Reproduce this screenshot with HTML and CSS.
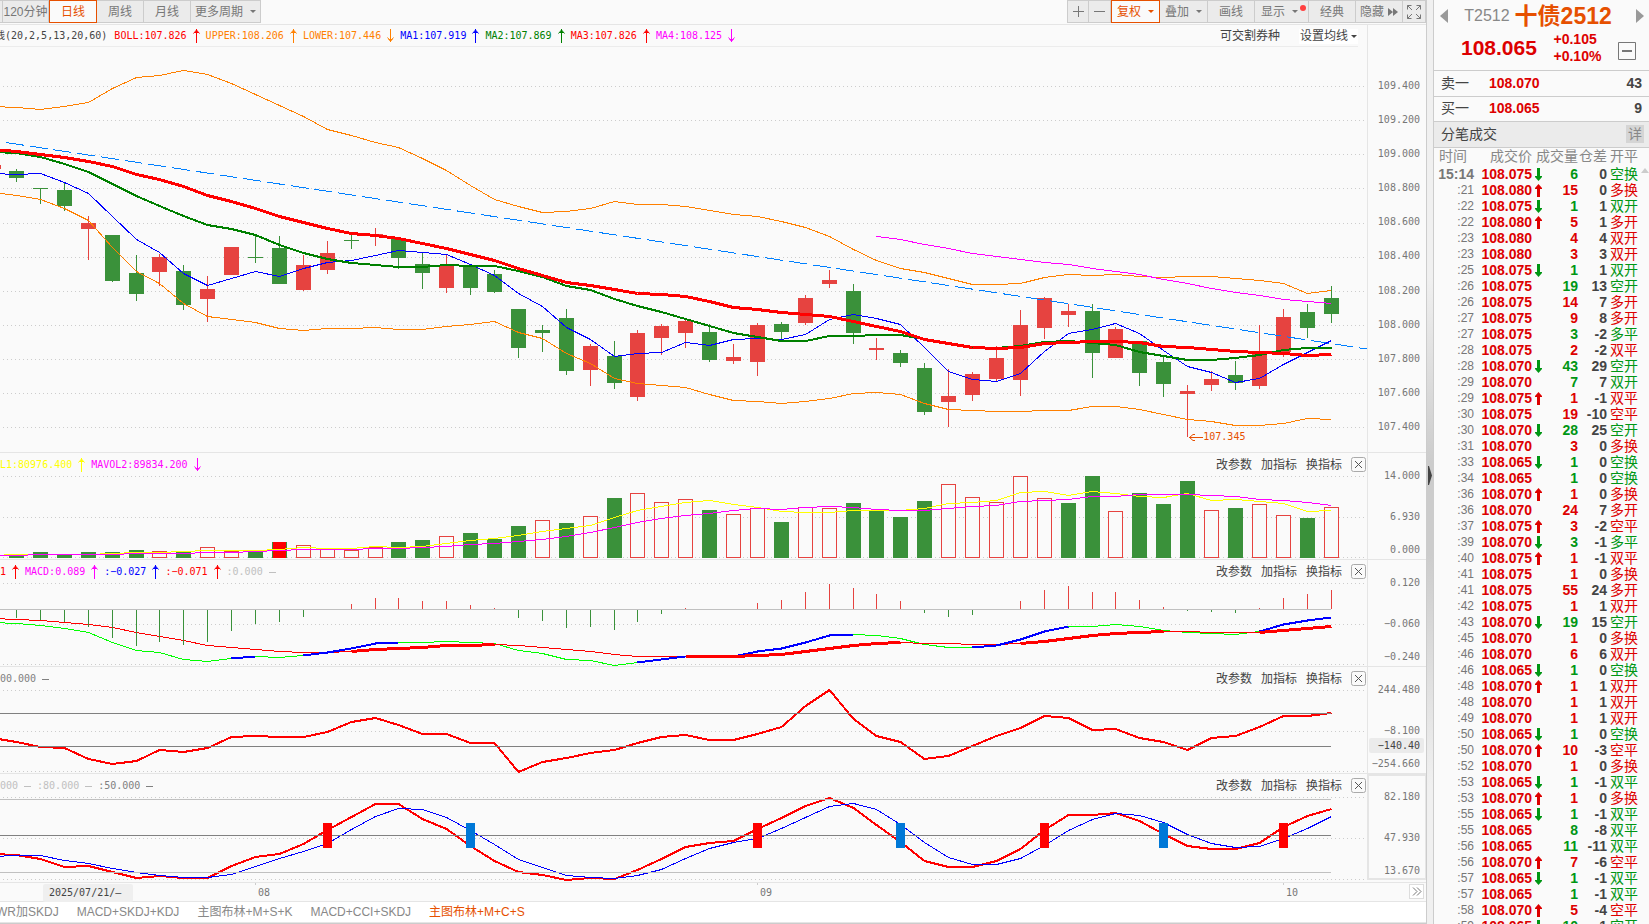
FILE: index.html
```
<!DOCTYPE html>
<html lang="zh-CN">
<head>
    <meta charset="UTF-8">
    <meta name="viewport" content="width=device-width, initial-scale=1.0">
    <title>十债2512 日线</title>
    <link rel="stylesheet" href="styles.css">
</head>
<body>

    <svg class="sprite" aria-hidden="true">
        <symbol id="up" viewBox="0 0 19 14"><path d="M9.500 0V14M8.500 2.500H10.500M7.500 3.500H11.500M6.500 4.500L9.500 1L12.500 4.500" fill="none" stroke="currentColor"/></symbol>
        <symbol id="down" viewBox="0 0 19 14"><path d="M9.500 0V13M8.500 11.500H10.500M7.500 10.500H11.500M6.500 8.500L9.500 12L12.500 8.500" fill="none" stroke="currentColor"/></symbol>
        <symbol id="flat" viewBox="0 0 19 14"><path d="M6 7.500H13" fill="none" stroke="currentColor"/></symbol>
        <symbol id="tick-up" viewBox="0 0 7 13"><path d="M3.500 0L7 4V5H5V13H2V5H0V4Z" fill="currentColor"/></symbol>
        <symbol id="tick-down" viewBox="0 0 7 13"><path d="M3.500 13L7 9V8H5V0H2V8H0V9Z" fill="currentColor"/></symbol>
        <symbol id="close" viewBox="0 0 15 15"><rect x="0.500" y="0.500" width="14" height="14" rx="2" fill="none" stroke="#aaa"/><path d="M4 4L11 11M11 4L4 11" stroke="#555"/></symbol>
    </svg>

    <main class="chart">
        <nav class="toolbar">
            <div class="group">
                <button class="stub" aria-label="60分钟"></button>
                <button class="w46">120分钟</button>
                <button class="w48 active">日线</button>
                <button class="w47">周线</button>
                <button class="w47">月线</button>
                <button class="w70">更多周期<i class="caret"></i></button>
            </div>
            <div class="group">
                <button class="w22" aria-label="放大"><svg width="11" height="11"><path d="M5.500 0V11M0 5.500H11" stroke="#777"/></svg></button>
                <button class="w22" aria-label="缩小"><svg width="11" height="11"><path d="M0 5.500H11" stroke="#777"/></svg></button>
                <button class="w49 active">复权<i class="caret"></i></button>
                <button class="w48">叠加<i class="caret"></i></button>
                <button class="w47">画线</button>
                <button class="w54 marked">显示<i class="caret"></i><i class="dot"></i></button>
                <button class="w47">经典</button>
                <button class="w47">隐藏<svg width="10" height="8"><path d="M0 0L5 4L0 8ZM5 0L10 4L5 8Z" fill="#777"/></svg></button>
                <button class="w23" aria-label="全屏"><svg width="14" height="14"><path d="M0.500 4.500V0.500H4.500M0.500 0.500L5 5M9.500 0.500H13.500V4.500M13.500 0.500L9 5M0.500 9.500V13.500H4.500M0.500 13.500L5 9M13.500 9.500V13.500H9.500M13.500 13.500L9 9" fill="none" stroke="#777"/></svg></button>
            </div>
        </nav>

        <section class="panel main-panel">
            <div class="plot">
                <header class="panel-head">
                    <div class="legend">
                        <span class="params">线(20,2,5,13,20,60)</span>
                        <span class="red">BOLL:107.826<svg><use href="#up"/></svg></span>
                        <span class="orange">UPPER:108.206<svg><use href="#up"/></svg></span>
                        <span class="orange">LOWER:107.446<svg><use href="#down"/></svg></span>
                        <span class="blue">MA1:107.919<svg><use href="#up"/></svg></span>
                        <span class="green">MA2:107.869<svg><use href="#up"/></svg></span>
                        <span class="red">MA3:107.826<svg><use href="#up"/></svg></span>
                        <span class="magenta">MA4:108.125<svg><use href="#down"/></svg></span>
                    </div>
                    <div class="tools wide">
                        <button>可交割券种</button>
                        <button class="ma-set">设置均线<i class="caret"></i></button>
                    </div>
                </header>
                <svg id="kline" class="canvas" viewBox="0 47 1367 405" preserveAspectRatio="none"></svg>
                <div class="low-mark"><svg width="14" height="7"><path d="M14 3.500H0M6 0.500H4L0.500 3.500L4 6.500H6" fill="none" stroke="currentColor"/></svg>107.345</div>
            </div>
            <div class="axis">
                <span>109.400</span><span>109.200</span><span>109.000</span><span>108.800</span>
                <span>108.600</span><span>108.400</span><span>108.200</span><span>108.000</span>
                <span>107.800</span><span>107.600</span><span>107.400</span>
            </div>
        </section>

        <section class="panel">
            <div class="plot">
                <header class="panel-head">
                    <div class="legend">
                        <span class="yellow">L1:80976.400<svg><use href="#up"/></svg></span>
                        <span class="magenta">MAVOL2:89834.200<svg><use href="#down"/></svg></span>
                    </div>
                    <div class="tools">
                        <button>改参数</button><button>加指标</button><button>换指标</button>
                        <button class="close" aria-label="关闭"><svg><use href="#close"/></svg></button>
                    </div>
                </header>
                <svg id="volume" class="canvas" viewBox="0 475 1367 84" preserveAspectRatio="none"></svg>
            </div>
            <div class="axis"><span>14.000</span><span>6.930</span><span>0.000</span></div>
        </section>

        <section class="panel">
            <div class="plot">
                <header class="panel-head">
                    <div class="legend">
                        <span class="red">1<svg><use href="#up"/></svg></span>
                        <span class="magenta">MACD:0.089<svg><use href="#up"/></svg></span>
                        <span class="blue">:−0.027<svg><use href="#up"/></svg></span>
                        <span class="red">:−0.071<svg><use href="#up"/></svg></span>
                        <span class="silver">:0.000<svg><use href="#flat"/></svg></span>
                    </div>
                    <div class="tools">
                        <button>改参数</button><button>加指标</button><button>换指标</button>
                        <button class="close" aria-label="关闭"><svg><use href="#close"/></svg></button>
                    </div>
                </header>
                <svg id="macd" class="canvas" viewBox="0 582 1367 84" preserveAspectRatio="none"></svg>
            </div>
            <div class="axis"><span>0.120</span><span>−0.060</span><span>−0.240</span></div>
        </section>

        <section class="panel">
            <div class="plot">
                <header class="panel-head">
                    <div class="legend">
                        <span class="gray">00.000<svg><use href="#flat"/></svg></span>
                    </div>
                    <div class="tools">
                        <button>改参数</button><button>加指标</button><button>换指标</button>
                        <button class="close" aria-label="关闭"><svg><use href="#close"/></svg></button>
                    </div>
                </header>
                <svg id="cci" class="canvas" viewBox="0 689 1367 84" preserveAspectRatio="none"></svg>
            </div>
            <div class="axis"><span>244.480</span><span>−8.100</span><span class="current">−140.40</span><span>−254.660</span></div>
        </section>

        <section class="panel last">
            <div class="plot">
                <header class="panel-head">
                    <div class="legend">
                        <span class="silver">000<svg><use href="#flat"/></svg></span>
                        <span class="silver">:80.000<svg><use href="#flat"/></svg></span>
                        <span class="gray">:50.000<svg><use href="#flat"/></svg></span>
                    </div>
                    <div class="tools">
                        <button>改参数</button><button>加指标</button><button>换指标</button>
                        <button class="close" aria-label="关闭"><svg><use href="#close"/></svg></button>
                    </div>
                </header>
                <svg id="skdj" class="canvas" viewBox="0 796 1367 86" preserveAspectRatio="none"></svg>
            </div>
            <div class="axis boxed"><span>82.180</span><span>47.930</span><span>13.670</span></div>
        </section>

        <div class="timeline">
            <span class="date">2025/07/21/—</span>
            <span class="month">08</span>
            <span class="month">09</span>
            <span class="month">10</span>
            <button aria-label="最新"><svg width="10" height="9"><path d="M1 0.500L5 4.500L1 8.500M5 0.500L9 4.500L5 8.500" fill="none" stroke="#777"/></svg></button>
        </div>

        <nav class="tabs">
            <a href="#">WR加SKDJ</a>
            <a href="#">MACD+SKDJ+KDJ</a>
            <a href="#">主图布林+M+S+K</a>
            <a href="#">MACD+CCI+SKDJ</a>
            <a href="#" class="active">主图布林+M+C+S</a>
        </nav>
    </main>

    <div class="splitter"><svg width="4" height="19"><path d="M0 0L1 0L4 9.500L1 19H0Z" fill="#444"/></svg></div>

    <aside class="quote">
        <header class="quote-head">
            <div class="name-row">
                <button aria-label="上一个"><svg width="8" height="14"><path d="M8 0V14L0 7Z" fill="#999"/></svg></button>
                <div><span class="code">T2512</span><strong class="name">十债2512</strong></div>
                <button aria-label="下一个"><svg width="8" height="14"><path d="M0 0V14L8 7Z" fill="#999"/></svg></button>
            </div>
            <div class="price-row">
                <strong class="price">108.065</strong>
                <div class="change"><span>+0.105</span><span>+0.10%</span></div>
                <button aria-label="收起"><svg width="18" height="18"><path d="M0.500 0.500H17.500V17.500H0.500ZM4 8.500H14M4 9.500H14" fill="none" stroke="#777"/></svg></button>
            </div>
        </header>
        <div class="book-row"><span>卖一</span><b class="bid">108.070</b><b>43</b></div>
        <div class="book-row"><span>买一</span><b class="bid">108.065</b><b>9</b></div>
        <div class="ticks-title"><span>分笔成交</span><button>详</button></div>
        <div class="ticks-wrap">
            <table class="ticks">
                <colgroup><col class="c-time"><col class="c-price"><col class="c-arrow"><col class="c-vol"><col class="c-diff"><col></colgroup>
                <thead>
                    <tr><th>时间</th><th>成交价</th><th colspan="2">成交量</th><th>仓差</th><th>开平</th></tr>
                </thead>
                <tbody id="ticks"></tbody>
            </table>
            <svg class="scroll-up" width="8" height="5"><path d="M0 5L4 0L8 5Z" fill="#ccc"/></svg>
        </div>
    </aside>

    <script src="script.js"></script>
</body>
</html>
```
FILE: styles.css
```
* {
    box-sizing: border-box;
}
body {
    margin: 0;
    height: 100vh;
    display: flex;
    overflow: hidden;
    background-color: #fafafa;
    color: #444;
    font-family: "Liberation Sans", "Noto Sans CJK SC", sans-serif;
    font-size: 12px;
    line-height: 16px;
}
button {
    padding: 0;
    border: none;
    background: none;
    color: inherit;
    font: inherit;
    cursor: pointer;
}
svg {
    display: block;
    flex: none;
}
.sprite {
    position: absolute;
    width: 0;
    height: 0;
}
.chart {
    flex: 1;
    min-width: 0;
    display: flex;
    flex-direction: column;
}

/* toolbar */
.toolbar {
    display: flex;
    justify-content: space-between;
    height: 25px;
    border-bottom: 1px solid #e5e5e5;
}
.group {
    display: flex;
    height: 23px;
}
.group button {
    position: relative;
    display: flex;
    align-items: center;
    justify-content: center;
    gap: 4px;
    background-color: #ebebeb;
    border: 1px solid #ccc;
    border-left: none;
    color: #777;
    white-space: nowrap;
}
.group + .group button:first-child {
    border-left: 1px solid #ccc;
}
.group button.active {
    background-color: #fafafa;
    border: 1px solid #e65000;
    color: #e65000;
}
.group button.marked {
    padding-right: 4px;
}
.stub { width: 3px; }
.w22 { width: 22px; }
.w23 { width: 23px; }
.w46 { width: 46px; }
.w47 { width: 47px; }
.w48 { width: 48px; }
.w49 { width: 49px; }
.w54 { width: 54px; }
.w70 { width: 70px; }
.caret {
    margin-left: 3px;
    border: 3px solid transparent;
    border-top-color: currentColor;
    border-bottom: none;
}
.dot {
    position: absolute;
    top: 4px;
    right: 2px;
    width: 6px;
    height: 6px;
    border-radius: 3px;
    background-color: #ff4040;
}

/* chart panels */
.panel {
    display: flex;
    height: 107px;
    border-bottom: 1px solid #e5e5e5;
}
.main-panel {
    flex: 1;
    min-height: 0;
}
.last {
    height: 109px;
}
.plot {
    position: relative;
    flex: 1;
    min-width: 0;
    display: flex;
    flex-direction: column;
}
.panel-head {
    display: flex;
    flex: none;
    justify-content: space-between;
    align-items: center;
    height: 22px;
    padding-top: 1px;
}
.main-panel .panel-head {
    margin-right: 9px;
    border-bottom: 1px solid #ececec;
}
.legend {
    display: flex;
    font-family: "DejaVu Sans Mono", "Noto Sans CJK SC", monospace;
    font-size: 10px;
    white-space: nowrap;
}
.legend span {
    display: flex;
    align-items: center;
}
.legend svg {
    width: 19px;
    height: 14px;
}
.legend .params {
    margin: 0 7px 0 -5px;
}
.tools {
    display: flex;
    align-items: center;
    gap: 9px;
    padding-right: 1px;
}
.tools.wide {
    gap: 19px;
    padding-right: 0;
}
.tools .close svg {
    width: 15px;
    height: 15px;
}
.ma-set {
    display: flex;
    align-items: center;
    height: 15px;
    padding: 0 1px;
    background-color: #fff;
}
.canvas {
    flex: 1;
    min-height: 0;
    width: 100%;
    shape-rendering: crispEdges;
}
.low-mark {
    position: absolute;
    left: 87%;
    bottom: 9px;
    display: flex;
    align-items: center;
    height: 12px;
    color: #e65000;
    font-family: "DejaVu Sans Mono", monospace;
    font-size: 10px;
}
.red { color: #f00; }
.orange { color: #ff8000; }
.blue { color: #00f; }
.green { color: #008000; }
.magenta { color: #f0f; }
.yellow { color: #ff0; }
.silver { color: #c0c0c0; }
.gray { color: #808080; }

.axis {
    display: flex;
    flex-direction: column;
    width: 59px;
    padding: 17px 6px 3px 0;
    border-left: 1px solid #e5e5e5;
    color: #777;
    font-family: "DejaVu Sans Mono", monospace;
    font-size: 10px;
    line-height: 12px;
    text-align: right;
}
.axis span:first-child {
    margin-bottom: 29px;
}
.axis span:last-child {
    margin-top: auto;
}
.main-panel .axis {
    justify-content: space-between;
    padding: 55px 6px 19px 0;
}
.main-panel .axis span {
    margin: 0;
}
.axis .current {
    margin: 1px -4px 0 1px;
    padding-right: 4px;
    border-radius: 2px;
    background-color: #ebebeb;
    color: #444;
    line-height: 15px;
}
.axis.boxed {
    margin-bottom: 2px;
    padding: 15px 5px 1px 0;
    border: 2px solid #e5e5e5;
    border-right-width: 1px;
}

/* time axis, columns follow the first bar of each month */
.timeline {
    display: grid;
    grid-template-columns: 43fr 212fr 502fr 526fr 126fr 17px;
    height: 19px;
    border-bottom: 1px solid #e5e5e5;
    color: #777;
    font-family: "DejaVu Sans Mono", monospace;
    font-size: 10px;
    line-height: 19px;
}
.date {
    grid-column: 2;
    justify-self: start;
    margin-top: 1px;
    padding: 0 12px 0 6px;
    border-radius: 2px;
    background-color: #efefef;
    color: #444;
    line-height: 17px;
}
.month {
    padding-left: 3px;
    background: linear-gradient(#ccc, #ccc) no-repeat 0 0 / 1px 2px;
}
.timeline button {
    display: flex;
    align-items: center;
    justify-content: center;
    width: 15px;
    height: 15px;
    margin-top: 1px;
    background-color: #fff;
    border: 1px solid #ddd;
}
.tabs {
    display: flex;
    gap: 18px;
    height: 22px;
    padding-top: 1px;
    background-color: #fff;
    border-bottom: 1px solid #ccc;
    box-shadow: inset 0 -1px #e5e5e5;
    white-space: nowrap;
    line-height: 18px;
}
.tabs a {
    color: #888;
    text-decoration: none;
}
.tabs a:first-child {
    margin-left: -4px;
}
.tabs a.active {
    color: #e65000;
}
.splitter {
    display: flex;
    align-items: center;
    justify-content: center;
    width: 8px;
    padding-top: 27px;
    border: 1px solid #ccc;
    border-width: 0 1px;
    background: linear-gradient(#f0f0f0 0%, #f0f0f0 30%, #ccc 50%, #ccc 60%, #f0f0f0 85%);
}

/* quote side bar */
.quote {
    display: flex;
    flex-direction: column;
    width: 215px;
    font-size: 14px;
}
.quote-head {
    height: 71px;
    border-bottom: 1px solid #ccc;
}
.name-row {
    display: flex;
    justify-content: space-between;
    align-items: center;
    height: 32px;
    padding: 0 5px 0 6px;
}
.name-row div {
    display: flex;
    align-items: center;
    gap: 5px;
    margin-right: 8px;
    line-height: 32px;
}
.code {
    color: #888;
    font-size: 16px;
}
.name {
    color: #e65000;
    font-size: 23px;
}
.price-row {
    display: flex;
    justify-content: space-between;
    align-items: center;
    height: 31px;
    padding: 0 13px 0 27px;
    color: #d00;
}
.price-row button {
    margin-top: 7px;
}
.price {
    font-size: 21px;
}
.change {
    display: flex;
    flex-direction: column;
    font-weight: bold;
    line-height: 17px;
}
.book-row {
    display: grid;
    grid-template-columns: 48px 1fr auto;
    align-items: center;
    height: 26px;
    padding: 0 7px 2px 7px;
    border-bottom: 1px solid #ccc;
}
.book-row + .book-row {
    height: 25px;
}
.bid {
    color: #d00;
}
.ticks-title {
    display: flex;
    justify-content: space-between;
    align-items: center;
    height: 26px;
    padding: 0 5px 1px 7px;
    border-bottom: 1px solid #ccc;
    background-color: #ebebeb;
}
.ticks-title button {
    width: 18px;
    height: 18px;
    background-color: #d5d5d5;
    color: #888;
}
.ticks-wrap {
    position: relative;
    flex: 1;
    min-height: 0;
    overflow: hidden;
}
.scroll-up {
    position: absolute;
    top: 20px;
    right: 0;
}
.ticks {
    width: 100%;
    table-layout: fixed;
    border-collapse: collapse;
    text-align: right;
    white-space: nowrap;
}
.c-time { width: 40px; }
.c-price { width: 58px; }
.c-arrow { width: 12px; }
.c-vol { width: 34px; }
.c-diff { width: 29px; }
.ticks th {
    height: 18px;
    padding: 0 0 2px;
    color: #888;
    font-weight: normal;
    line-height: 16px;
}
.ticks th:first-child {
    padding-right: 7px;
}
.ticks td {
    height: 16px;
    padding: 0;
    font-weight: bold;
    line-height: 16px;
}
.ticks td:first-child {
    color: #777;
    font-size: 12px;
    font-weight: normal;
}
.ticks tr:first-child td:first-child {
    font-size: 14px;
    font-weight: bold;
}
.ticks svg {
    width: 7px;
    height: 13px;
    margin-left: 3px;
}
.ticks th:last-child,
.ticks td:last-child {
    padding-left: 3px;
    text-align: left;
    font-weight: normal;
}
.ticks .buy {
    color: #d00;
}
.ticks .sell {
    color: #009614;
}
```
FILE: script.js
```
const RED = '#e64340', GREEN = '#3a913a';
const STEP = 23.9, FIRST = 16.5;

// centre of bar i, kept on half pixels so the wicks stay sharp
const barX = i => Math.floor(FIRST + STEP * i) + 0.5;

const rect = (x, y, w, h, color) => `<rect x="${x}" y="${y}" width="${w}" height="${h}" fill="${color}"/>`;
const hline = (y, color, end = 1331) => `<path d="M0 ${y}H${end}" stroke="${color}"/>`;
const grid = ys => ys.map(y => `<path d="M3 ${y}H1370" stroke="#ccc" stroke-dasharray="1 3"/>`).join('');

// polyline through ys, the first value belongs to bar `start`
function line(ys, color, width = 1, start = -1) {
    const pts = ys.map((y, i) => `${barX(i + start)},${y}`).join(' ');
    return `<polyline points="${pts}" fill="none" stroke="${color}" stroke-width="${width}"/>`;
}
// only bars a..b of a series that starts at bar -1
const part = (ys, a, b, color, width) => line(ys.slice(a + 1, b + 2), color, width, a);

// body top, body bottom, high, low, up (1) or down (0)
const candles = [
    [171,178,169,182,0],[188,189,188,204,0],[190,206,182,211,0],[223,229,216,260,1],[235,281,235,282,0],
    [273,294,255,301,0],[257,272,254,286,1],[271,305,265,310,0],[289,299,276,322,1],[247,275,247,275,1],
    [257,258,235,263,0],[248,284,236,284,0],[265,290,255,291,1],[253,270,241,274,1],[240,241,233,249,0],
    [234,236,228,246,1],[239,258,238,269,0],[264,273,252,289,0],[265,288,255,293,1],[266,288,266,295,0],
    [274,292,270,293,0],[309,348,309,358,0],[330,333,325,352,0],[318,371,309,375,0],[346,370,344,386,1],
    [356,383,341,389,0],[333,397,330,401,1],[326,338,324,355,1],[321,333,319,348,1],[332,360,324,362,0],
    [357,361,344,364,1],[325,362,323,376,1],[324,332,322,340,0],[298,323,295,325,1],[280,284,270,288,1],
    [291,333,284,344,0],[348,350,338,360,1],[353,363,350,367,0],[368,412,363,415,0],[396,402,369,427,1],
    [374,395,372,401,1],[358,379,346,381,1],[325,380,310,396,1],[298,328,297,339,1],[311,315,304,327,1],
    [311,353,304,378,0],[329,358,327,358,1],[341,373,341,386,0],[362,384,355,397,0],[391,394,385,437,1],
    [379,385,371,391,1],[375,383,361,390,0],[353,386,325,389,1],[317,352,309,357,1],[312,328,304,338,0],
    [298,314,286,323,0]
];
const upper = [106,107,109,106,102,88,77,75,70,74,83,94,105,116,129,135,142,147,158,170,185,199,206,212,211,208,201,204,204,206,210,214,216,221,227,236,249,260,268,272,278,284,284,283,277,274,275,274,276,277,276,276,278,280,283,293,290];
const lower = [192,195,199,208,220,247,271,283,303,316,319,322,328,330,328,328,327,329,329,326,324,321,332,338,353,363,378,383,385,387,394,400,401,403,401,398,393,392,394,403,409,410,411,411,410,410,406,406,409,414,419,421,425,425,423,418,419];
const ma1 = [173,174,173,182,193,216,239,252,273,285,278,271,276,268,262,260,255,250,252,254,264,275,293,306,327,339,356,353,352,342,345,339,338,339,334,319,314,318,324,347,371,379,381,373,351,333,329,323,333,350,366,372,382,378,364,352,340];
const ma2 = [152,153,157,164,172,184,196,206,216,225,229,235,245,253,259,263,265,267,267,265,266,266,271,277,286,290,299,306,312,319,326,333,337,341,341,336,336,335,335,339,343,347,348,346,342,341,343,345,352,356,360,360,358,355,350,348,348];
const ma3 = [149,151,154,157,161,166,174,179,186,195,201,208,216,222,228,233,235,238,243,248,254,260,268,275,282,285,289,293,294,296,301,307,309,312,314,316,321,326,331,339,343,347,348,347,343,342,341,341,342,346,347,349,351,352,353,355,354].map(y => y + 0.5);
const ma4 = [236,239,244,248,253,256,259,262,264,268,271,274,279,283,288,292,295,299,301,303];

document.getElementById('kline').innerHTML =
    grid([86.5, 120.5, 154.5, 188.5, 223.5, 257.5, 291.5, 325.5, 359.5, 393.5, 427.5]) +
    rect(0, 165, 1, 4, RED) +
    candles.map(([top, bottom, high, low, up], i) => {
        const x = barX(i), color = up ? RED : GREEN;
        return rect(x - 0.5, high, 1, low - high, color) + rect(x - 7.5, top, 15, bottom - top, color);
    }).join('') +
    '<path d="M6 142.500L1367 349" stroke="#0080ff" stroke-dasharray="18 6"/>' +
    line(upper.map(y => y + 0.5), '#ff8000') + line(lower.map(y => y + 0.5), '#ff8000') +
    line(ma1.map(y => y + 0.5), '#00f') + line(ma2, '#008000', 2) + line(ma3, '#f00', 3) +
    line(ma4.map(y => y + 0.5), '#f0f', 1, 36);

// volume bars: top edge, h = hollow, f = filled, s = limit day
const volTop = [555,552,554,552,552,550,551,552,547,551,551,542,545,549,550,547,542,540,536,533,539,526,520,523,516,498,493,502,499,510,514,508,522,507,508,503,510,517,501,484,497,502,476,498,503,476,511,493,504,481,510,508,504,515,518,507];
const volKind = 'ffffffhfhhfshhhhffhfffhfhfhhhfhhfhhffffhhhhhffhfffhfhhfh'.split('');
volKind[44] = 'f';
const mavol1 = [555,554,554,554,554,553,552,552,551,550,550,550,549,547,548,548,546,547,546,543,540,538,535,531,528,525,517,510,506,502,500,504,507,511,512,512,510,510,510,508,503,502,500,492,491,495,491,493,496,497,493,500,499,501,503,511,510];
const mavol2 = [555,555,554,554,554,554,553,553,553,552,552,551,550,549,549,549,548,548,547,546,544,543,541,539,536,532,527,522,518,515,513,510,508,509,507,506,507,509,510,510,508,506,505,501,500,499,496,496,494,494,494,495,496,499,500,502,505];

document.getElementById('volume').innerHTML =
    grid([476.5, 517.5, 557.5]) +
    volTop.map((top, i) => {
        const x = barX(i) - 7.5;
        if (volKind[i] === 'h') {
            return `<rect x="${x + 0.5}" y="${top + 0.5}" width="14" height="${557 - top}" fill="#fafafa" stroke="${RED}"/>`;
        }
        const bar = rect(x, top, 15, 558 - top, GREEN);
        return volKind[i] === 's' ? bar + rect(x + 1, top, 13, 558 - top, '#f00') : bar;
    }).join('') +
    line(mavol1.map(y => y + 0.5), '#ff0') + line(mavol2.map(y => y + 0.5), '#f0f');

// MACD histogram ends, 609 is the zero line
const hist = [618,620,622,627,638,646,642,645,642,631,624,622,617,609,604,598,598,601,601,605,608,618,621,628,627,630,622,614,608,609,609,603,600,592,584,588,594,601,613,617,615,609,601,590,586,592,592,600,607,611,612,613,608,598,594,590];
const dif = [622,623,625,628,632,642,650,652,659,661,658,656,657,655,652,648,643,642,642,641,642,643,650,653,659,660,665,662,659,656,656,656,651,648,642,635,634,635,638,644,647,647,645,639,631,626,626,624,626,630,632,633,634,631,624,620,617].map(y => y + 0.5);
const dea = [618,619,620,622,624,627,632,636,640,645,647,649,651,652,652,651,649,648,647,645,645,644,645,647,649,651,654,656,656,656,656,656,655,654,651,648,645,643,642,643,643,644,644,643,641,638,635,633,632,631,631,632,632,632,630,628,626].map(y => y + 0.5);

document.getElementById('macd').innerHTML =
    grid([583.5, 624.5, 664.5]) +
    hline(609.5, '#c0c0c0') +
    line(dif, '#0f0') + line(dea, '#f00') +
    hist.map((y, i) => y < 609 ? rect(barX(i) - 0.5, y, 1, 609 - y, RED) : y > 609 ? rect(barX(i) - 0.5, 610, 1, y - 610, GREEN) : '').join('') +
    [[9, 10], [12, 16], [26, 35], [40, 44], [52, 55]].map(([a, b]) => part(dif, a, b, '#00f', 2)).join('') +
    [[14, 20], [28, 37], [42, 48], [52, 55]].map(([a, b]) => part(dea, a, b, '#f00', 3)).join('');

const cci = [738,742,747,748,759,764,761,750,752,748,737,736,737,737,732,722,718,725,734,734,743,743,772,762,758,753,750,743,737,735,740,740,734,727,706,690,719,736,742,759,756,746,736,728,716,718,730,729,738,742,750,738,736,727,716,716,713];

document.getElementById('cci').innerHTML =
    grid([690.5, 731.5, 771.5]) +
    line(cci, '#f00', 2) +
    hline(713.5, '#808080') + hline(746.5, '#808080');

const k = [854,855,859,867,866,872,878,876,878,878,866,857,854,844,830,817,804,804,819,829,846,861,872,875,880,878,879,870,859,847,843,841,829,818,806,798,808,825,842,861,867,867,861,849,830,815,815,813,821,834,846,849,849,843,827,816,809];
const d = [856,855,855,860,863,868,872,875,877,877,874,866,858,851,843,829,816,808,809,817,830,844,859,867,875,877,878,875,869,858,848,842,838,828,817,806,803,809,824,842,857,864,864,858,845,830,819,813,815,822,834,843,847,846,838,828,816];

document.getElementById('skdj').innerHTML =
    grid([797.5, 838.5, 879.5]) +
    line(k, '#f00', 2) + line(d.map(y => y + 0.5), '#00f') +
    hline(799.5, '#c0c0c0') + hline(835.5, '#808080') + hline(872.5, '#c0c0c0') +
    [13, 31, 43, 53].map(i => rect(barX(i) - 4.5, 823, 9, 25, '#f00')).join('') +
    [19, 37, 48].map(i => rect(barX(i) - 4.5, 823, 9, 25, '#0078d7')).join('');

// time, price, direction, volume, open interest change, type, side
const ticks = `15:14 075 d 6 0 空换 s
:21 080 u 15 0 多换 b
:22 075 d 1 1 双开 s
:22 080 u 5 1 多开 b
:23 080 - 4 4 双开 b
:23 080 - 3 3 双开 b
:25 075 d 1 1 双开 s
:26 075 - 19 13 空开 s
:26 075 - 14 7 多开 b
:27 075 - 9 8 多开 b
:27 075 - 3 -2 多平 s
:28 075 - 2 -2 双平 b
:28 070 d 43 29 空开 s
:29 070 - 7 7 双开 s
:29 075 u 1 -1 双平 b
:30 075 - 19 -10 空平 b
:30 070 d 28 25 空开 s
:31 070 - 3 0 多换 b
:33 065 d 1 0 空换 s
:34 065 - 1 0 空换 s
:36 070 u 1 0 多换 b
:36 070 - 24 7 多开 b
:37 075 u 3 -2 空平 b
:39 070 d 3 -1 多平 s
:40 075 u 1 -1 双平 b
:41 075 - 1 0 多换 b
:41 075 - 55 24 多开 b
:42 075 - 1 1 双开 b
:43 070 d 19 15 空开 s
:45 070 - 1 0 多换 b
:46 070 - 6 6 双开 b
:46 065 d 1 0 空换 s
:48 070 u 1 1 双开 b
:48 070 - 1 1 双开 b
:49 070 - 1 1 双开 b
:50 065 d 1 0 空换 s
:50 070 u 10 -3 空平 b
:52 070 - 1 0 多换 b
:53 065 d 1 -1 双平 s
:53 070 u 1 0 多换 b
:55 065 d 1 -1 双平 s
:55 065 - 8 -8 双平 s
:56 065 - 11 -11 双平 s
:56 070 u 7 -6 空平 b
:57 065 d 1 -1 双平 s
:57 065 - 1 -1 双平 s
:58 070 u 5 -4 空平 b
:59 065 d 10 1 空开 s`.split('\n').map(row => row.split(' '));

document.getElementById('ticks').innerHTML = ticks.map(([time, price, dir, vol, diff, type, side]) => {
    const cls = side === 'b' ? 'buy' : 'sell';
    const arrow = dir === 'u' ? '<svg class="buy"><use href="#tick-up"/></svg>' :
        dir === 'd' ? '<svg class="sell"><use href="#tick-down"/></svg>' : '';
    return `<tr><td>${time}</td><td class="buy">108.${price}</td><td>${arrow}</td>
        <td class="${cls}">${vol}</td><td>${diff}</td><td class="${cls}">${type}</td></tr>`;
}).join('');
```
